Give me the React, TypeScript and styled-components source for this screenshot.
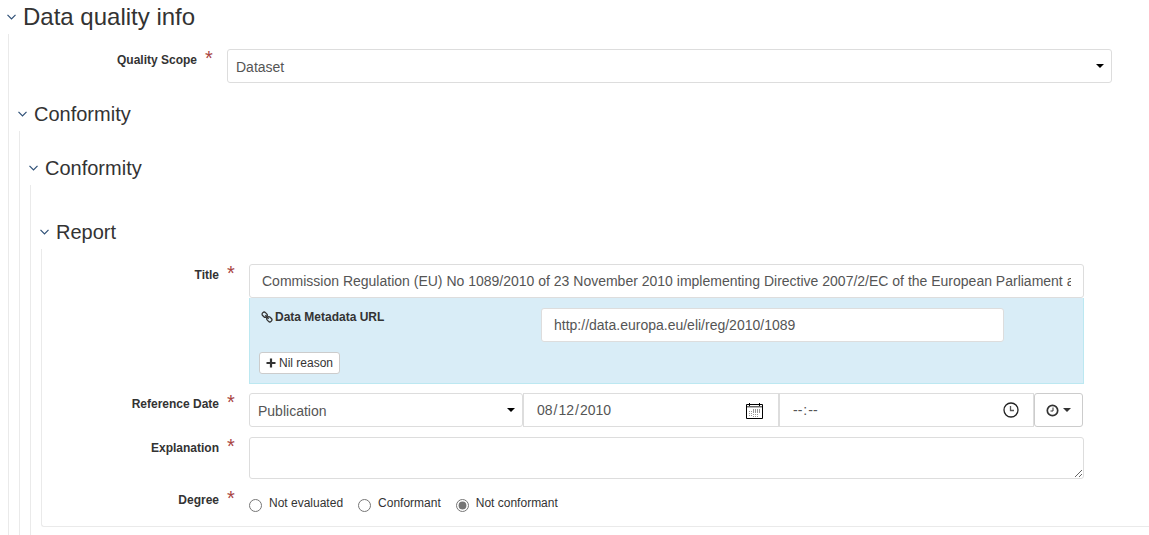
import React from "react";
import styled, { createGlobalStyle } from "styled-components";

const GlobalStyle = createGlobalStyle`
  *, *::before, *::after { box-sizing: border-box; }
  body {
    margin: 0;
    background: #fff;
    color: #333;
    font: 12px/18px "Liberation Sans", Arial, sans-serif;
  }
  input, select, textarea, button { font-family: inherit; }
`;

const Page = styled.form`
  display: flex;
  flex-direction: column;
  min-height: 100vh;
  padding-left: 7px;
`;

const Section = styled.section<{ $gap?: number; $fill?: boolean }>`
  display: flex;
  flex-direction: column;
  flex: ${(p) => (p.$fill ? "1 0 auto" : "0 0 auto")};
  margin-top: ${(p) => p.$gap ?? 0}px;
`;

const Toggle = styled.button`
  display: flex;
  align-items: center;
  gap: 7px;
  height: 34px;
  padding: 0;
  border: 0;
  background: none;
  color: inherit;
  cursor: pointer;
`;

const Heading = styled.h2<{ $size: number }>`
  margin: 0;
  font-size: ${(p) => p.$size}px;
  line-height: 34px;
  font-weight: 400;
`;

const SectionBody = styled.div<{ $fill?: boolean; $closed?: boolean }>`
  display: flex;
  flex-direction: column;
  flex: ${(p) => (p.$fill ? "1 0 auto" : "0 0 auto")};
  margin-left: 1px;
  padding-left: 9px;
  border-left: 1px solid #eaeaea;
  ${(p) => p.$closed && "padding: 15px 0 14px; border-bottom: 1px solid #eaeaea; border-bottom-left-radius: 3px;"}
`;

const Row = styled.div<{ $cols: string; $gap?: number }>`
  display: grid;
  grid-template-columns: ${(p) => p.$cols};
  align-items: start;
  margin-top: ${(p) => p.$gap ?? 0}px;
`;

const Label = styled.label`
  display: flex;
  justify-content: flex-end;
  padding: 2px 14px 0 0;
  font-weight: 700;
`;

const Star = styled.span`
  width: 8px;
  margin-left: 8px;
  color: #a94442;
  font-size: 20px;
  line-height: 14px;
  font-weight: 400;
`;

const Control = styled.input`
  display: block;
  width: 100%;
  height: 34px;
  padding: 0 12px;
  border: 1px solid #ddd;
  border-radius: 3px;
  background: #fff;
  color: #555;
  font-size: 14px;
  &::-webkit-calendar-picker-indicator { display: none; }
  &::-webkit-datetime-edit-ampm-field { display: none; }
`;

const Select = styled.select`
  display: block;
  width: 100%;
  height: 34px;
  padding: 2px 24px 0 8px;
  border: 1px solid #ddd;
  border-radius: 3px;
  background: #fff;
  color: #555;
  font-size: 14px;
  appearance: none;
`;

const Area = styled.textarea`
  display: block;
  width: 100%;
  height: 42px;
  padding: 6px 12px;
  border: 1px solid #ddd;
  border-radius: 3px;
  font-size: 14px;
  resize: vertical;
`;

const Holder = styled.div<{ $grow?: number }>`
  position: relative;
  flex: ${(p) => p.$grow ?? 1} 1 0;
  min-width: 0;
`;

const Overlay = styled.span<{ $right: number }>`
  position: absolute;
  top: 0;
  right: ${(p) => p.$right}px;
  height: 34px;
  display: flex;
  align-items: center;
  pointer-events: none;
`;

const DateGroup = styled.div`
  display: flex;
  padding-right: 1px;
  ${Control} { border-radius: 0; }
`;

const ClockButton = styled.button`
  display: flex;
  align-items: center;
  justify-content: center;
  gap: 4px;
  width: 49px;
  height: 34px;
  padding: 0;
  border: 1px solid #ccc;
  border-radius: 3px;
  background: #fff;
  color: #333;
`;

const LinkPanel = styled.div`
  padding: 10px 0 9px;
  border: 1px solid #bce8f1;
  border-top-width: 0;
  background: #d9edf7;
`;

const LinkLabel = styled.label`
  display: flex;
  align-items: center;
  gap: 2px;
  padding-left: 11px;
  font-weight: 700;
`;

const NilButton = styled.button`
  display: flex;
  align-items: center;
  justify-content: center;
  gap: 3px;
  width: 81px;
  height: 22px;
  margin: 10px 0 0 9px;
  padding: 0;
  border: 1px solid #ccc;
  border-radius: 3px;
  background: #fff;
  color: #333;
  font-size: 12px;
`;

const Radios = styled.div`
  display: flex;
  gap: 15px;
  padding-top: 5px;
`;

const RadioLabel = styled.label`
  display: flex;
  gap: 7px;
  input { width: 13px; height: 13px; margin: 5px 0 0; accent-color: #757575; }
`;

const Chevron = () => (
  <svg width="9" height="6" viewBox="0 0 9 6" fill="none" stroke="#2f5077" strokeWidth="1.2">
    <path d="M0.5 0.8 4.5 4.8 8.5 0.8" />
  </svg>
);

const Caret = ({ color = "#000" }: { color?: string }) => (
  <svg width="8" height="4" viewBox="0 0 8 4"><path d="M0 0H8L4 4Z" fill={color} /></svg>
);

const CalendarIcon = () => (
  <svg width="17" height="17" viewBox="0 0 17 17">
    <path d="M.5 2.5H16.5V16.5H.5Z" fill="#fff" stroke="#000" />
    <path d="M1 4.5H16" stroke="#666" />
    <path d="M1 5.5H16" stroke="#bbb" />
    <path d="M3.5 1V4M13.5 1V4" stroke="#000" />
    <path d="M3.5 9V15M5.5 9V15" stroke="#999" strokeDasharray="1 1" />
    <path d="M7.5 7V15M9.5 7V15M11.5 7V15M13.5 7V12" stroke="#999" strokeDasharray="4 1 1 1" />
  </svg>
);

const TimeIcon = () => (
  <svg width="16" height="16" viewBox="0 0 16 16" fill="none" stroke="#222" strokeWidth="1.3">
    <circle cx="8" cy="8" r="7" />
    <path d="M7.5 4V8.5H11" stroke="#555" />
  </svg>
);

const ClockIcon = () => (
  <svg width="13" height="13" viewBox="0 0 13 13" fill="none" stroke="#333">
    <circle cx="6.5" cy="6.5" r="5.2" strokeWidth="1.7" />
    <path d="M7 3.5V7H4.5" />
  </svg>
);

const LinkIcon = () => (
  <svg width="12" height="12" viewBox="0 0 12 12" fill="none" stroke="#333" strokeWidth="1.3">
    <g transform="rotate(45 6 6)">
      <rect x="0" y="4" width="5.4" height="4" rx="1.8" />
      <rect x="6.6" y="4" width="5.4" height="4" rx="1.8" />
      <path d="M3.6 6H8.4" />
    </g>
  </svg>
);

const PlusIcon = () => (
  <svg width="10" height="10" viewBox="0 0 10 10"><path d="M5 .5V9.5M.5 5H9.5" stroke="#333" strokeWidth="2.2" /></svg>
);

const OUTER = "209fr 885fr 37fr";
const INNER = "207fr 835fr 65fr";

const FieldLabel = ({ id, children }: { id?: string; children: string }) => (
  <Label htmlFor={id}>{children}<Star>*</Star></Label>
);

const SectionToggle = ({ size = 20, children }: { size?: number; children: string }) => (
  <Toggle type="button"><Chevron /><Heading $size={size}>{children}</Heading></Toggle>
);

const degrees = ["Not evaluated", "Conformant", "Not conformant"];

export default function App() {
  return (
    <Page>
      <GlobalStyle />
      <Section $fill>
        <SectionToggle size={24}>Data quality info</SectionToggle>
        <SectionBody $fill>
          <Row $cols={OUTER} $gap={15}>
            <FieldLabel id="scope">Quality Scope</FieldLabel>
            <Holder>
              <Select id="scope"><option>Dataset</option></Select>
              <Overlay $right={8}><Caret /></Overlay>
            </Holder>
          </Row>
          <Section $fill $gap={14}>
            <SectionToggle>Conformity</SectionToggle>
            <SectionBody $fill>
              <Section $fill $gap={20}>
                <SectionToggle>Conformity</SectionToggle>
                <SectionBody $fill>
                  <Section $gap={30}>
                    <SectionToggle>Report</SectionToggle>
                    <SectionBody $closed>
                      <Row $cols={INNER}>
                        <FieldLabel id="title">Title</FieldLabel>
                        <div>
                          <Control id="title" defaultValue="Commission Regulation (EU) No 1089/2010 of 23 November 2010 implementing Directive 2007/2/EC of the European Parliament and of the Council" />
                          <LinkPanel>
                            <Row $cols="291fr 463fr 79fr">
                              <LinkLabel htmlFor="url"><LinkIcon />Data Metadata URL</LinkLabel>
                              <Control id="url" defaultValue="http://data.europa.eu/eli/reg/2010/1089" />
                            </Row>
                            <NilButton type="button"><PlusIcon />Nil reason</NilButton>
                          </LinkPanel>
                        </div>
                      </Row>
                      <Row $cols={INNER} $gap={9}>
                        <FieldLabel id="datetype">Reference Date</FieldLabel>
                        <DateGroup>
                          <Holder $grow={274}>
                            <Select id="datetype"><option>Publication</option></Select>
                            <Overlay $right={8}><Caret /></Overlay>
                          </Holder>
                          <Holder $grow={256}>
                            <Control type="date" aria-label="Date" defaultValue="2010-08-12" />
                            <Overlay $right={16}><CalendarIcon /></Overlay>
                          </Holder>
                          <Holder $grow={255}>
                            <Control type="time" aria-label="Time" />
                            <Overlay $right={15}><TimeIcon /></Overlay>
                          </Holder>
                          <ClockButton type="button" aria-label="Date format"><ClockIcon /><Caret color="#333" /></ClockButton>
                        </DateGroup>
                      </Row>
                      <Row $cols={INNER} $gap={10}>
                        <FieldLabel id="explanation">Explanation</FieldLabel>
                        <Area id="explanation" />
                      </Row>
                      <Row $cols={INNER} $gap={10} role="radiogroup" aria-label="Degree">
                        <FieldLabel>Degree</FieldLabel>
                        <Radios>
                          {degrees.map((d) => (
                            <RadioLabel key={d}>
                              <input type="radio" name="degree" defaultChecked={d === "Not conformant"} />
                              {d}
                            </RadioLabel>
                          ))}
                        </Radios>
                      </Row>
                    </SectionBody>
                  </Section>
                </SectionBody>
              </Section>
            </SectionBody>
          </Section>
        </SectionBody>
      </Section>
    </Page>
  );
}
